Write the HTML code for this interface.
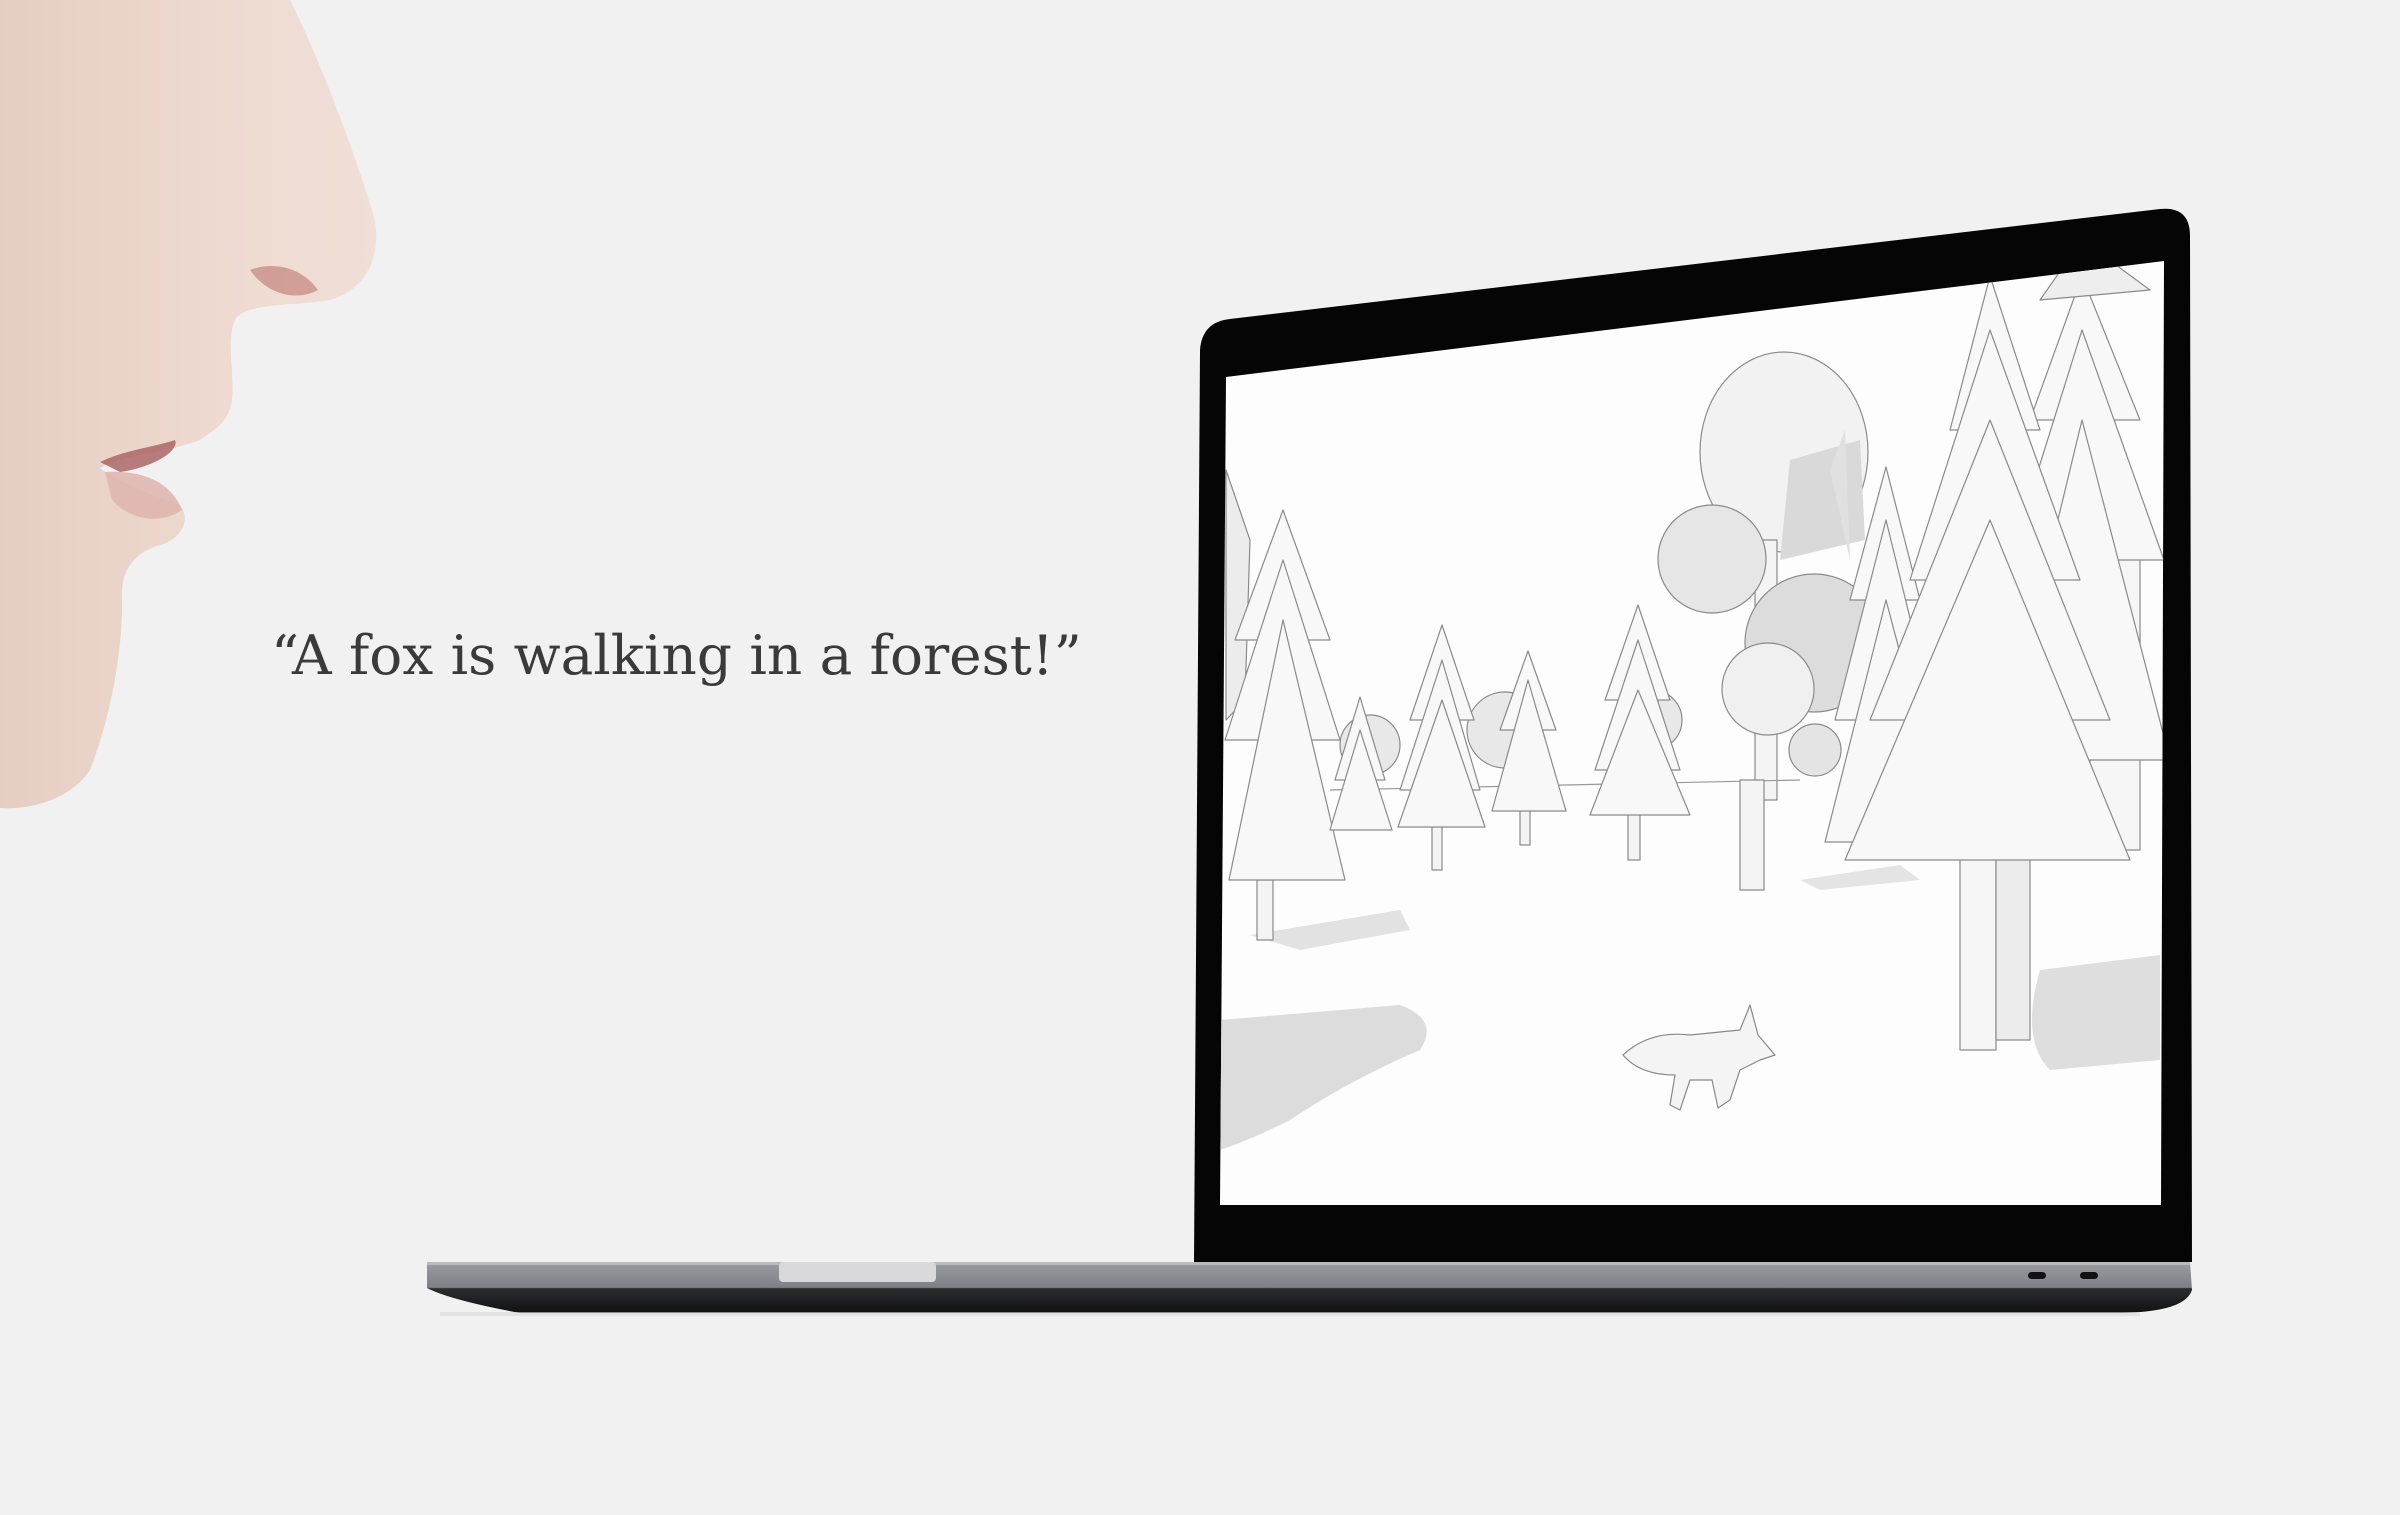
<!DOCTYPE html>
<html><head><meta charset="utf-8">
<style>
html,body{margin:0;padding:0;}
body{width:2400px;height:1515px;background:#f1f1f2;position:relative;overflow:hidden;}
.q{position:absolute;left:271px;top:624px;font-family:"DejaVu Serif","Liberation Serif",serif;font-size:54px;color:#3a3a3a;white-space:nowrap;transform-origin:0 0;transform:scaleX(1.015);}
</style></head><body>
<svg width="2400" height="1515" viewBox="0 0 2400 1515" style="position:absolute;left:0;top:0">
<defs>
<linearGradient id="skin" x1="0" y1="0" x2="1" y2="0">
<stop offset="0" stop-color="#e6cdc2"/><stop offset="0.6" stop-color="#eedad1"/><stop offset="1" stop-color="#f0dfd7"/>
</linearGradient>
<linearGradient id="base" x1="0" y1="0" x2="0" y2="1">
<stop offset="0" stop-color="#9a9ca1"/><stop offset="0.5" stop-color="#7e8086"/><stop offset="0.52" stop-color="#2c2d30"/><stop offset="1" stop-color="#111"/>
</linearGradient>
<clipPath id="scr"><polygon points="1226,377 2164,261 2161,1205 1220,1205"/></clipPath>
</defs>
<path d="M0,0 L290,0 C320,60 350,140 372,210 C385,250 368,290 330,300 C300,306 250,302 236,318 C225,340 235,370 232,400 C230,420 215,430 200,440 C170,452 120,455 100,468 C115,480 150,495 180,505 C192,520 180,540 160,545 C135,552 120,570 122,600 C123,650 110,720 90,770 C70,800 30,810 0,808 Z" fill="url(#skin)"/>
<path d="M250,270 C270,262 300,265 318,290 C300,300 270,298 250,270 Z" fill="#c98f88" opacity="0.8"/>
<path d="M100,462 C125,450 150,448 175,440 C180,452 150,468 120,472 Z" fill="#a85e5e" opacity="0.8"/>
<path d="M105,472 C140,470 170,480 182,510 C160,525 130,520 112,500 Z" fill="#e0b6b0" opacity="0.9"/>
<path d="M427,1262 L2190,1262 L2192,1290 Q2185,1312 2120,1313 L520,1313 Q450,1300 427,1288 Z" fill="url(#base)"/>
<rect x="427" y="1262" width="1763" height="3" fill="#b8babd"/>
<rect x="779" y="1262" width="157" height="20" rx="4" fill="#d9d9db"/>
<rect x="2028" y="1272" width="18" height="7" rx="3.5" fill="#111"/>
<rect x="2080" y="1272" width="18" height="7" rx="3.5" fill="#111"/>
<rect x="440" y="1312" width="1700" height="4" fill="#d8d8d8" opacity="0.6"/>
<path d="M1230,319 L2160,209 Q2190,206 2190,236 L2192,1262 L1194,1262 L1200,350 Q1202,322 1230,319 Z" fill="#050505"/>
<polygon points="1226,377 2164,261 2161,1205 1220,1205" fill="#fdfdfd"/>
<g clip-path="url(#scr)" stroke="#8a8a8a" stroke-width="1.2" stroke-linejoin="round">
<path d="M1220,1020 L1400,1005 Q1440,1020 1420,1050 Q1350,1080 1290,1120 Q1250,1140 1220,1150 Z" fill="#dcdcdc" stroke="none"/>
<path d="M1250,935 L1400,910 L1410,930 L1300,950 Z" fill="#e2e2e2" stroke="none"/>
<path d="M2040,970 L2160,955 L2160,1060 L2050,1070 Q2020,1040 2040,970 Z" fill="#dedede" stroke="none"/>
<path d="M1800,880 L1900,865 L1920,880 L1820,890Z" fill="#e4e4e4" stroke="none"/>
<path d="M1226,470 L1250,540 L1245,700 L1226,720Z" fill="#ececec"/>
<ellipse cx="1784" cy="452" rx="84" ry="100" fill="#f2f2f2"/>
<path d="M1790,460 L1860,440 L1865,540 L1780,560Z" fill="#d9d9d9" stroke="none"/>
<rect x="1755" y="540" width="22" height="260" fill="#f4f4f4"/>
<circle cx="1712" cy="559" r="54" fill="#e6e6e6"/>
<circle cx="1814" cy="643" r="69" fill="#dcdcdc"/>
<circle cx="1768" cy="689" r="46" fill="#f0f0f0"/>
<circle cx="1505" cy="730" r="38" fill="#e8e8e8"/>
<circle cx="1370" cy="745" r="30" fill="#e8e8e8"/>
<circle cx="1652" cy="720" r="30" fill="#e8e8e8"/>
<circle cx="1815" cy="750" r="26" fill="#e4e4e4"/>
<line x1="1330" y1="790" x2="1800" y2="780" stroke="#999"/>
<rect x="1257" y="880" width="16" height="60" fill="#f4f4f4"/>
<rect x="1432" y="820" width="10" height="50" fill="#f4f4f4"/>
<rect x="1520" y="800" width="10" height="45" fill="#f4f4f4"/>
<rect x="1628" y="800" width="12" height="60" fill="#f4f4f4"/>
<rect x="1740" y="780" width="24" height="110" fill="#f4f4f4"/>
<g fill="#f8f8f8">
<path d="M1283,510 L1235,640 L1330,640Z"/><path d="M1283,560 L1225,740 L1340,740Z"/><path d="M1283,620 L1229,880 L1345,880Z"/>
<path d="M1360,697 L1335,780 L1385,780Z"/><path d="M1360,730 L1330,830 L1392,830Z"/>
<path d="M1442,625 L1410,720 L1474,720Z"/><path d="M1442,660 L1400,790 L1480,790Z"/><path d="M1442,700 L1398,827 L1485,827Z"/>
<path d="M1528,651 L1500,730 L1556,730Z"/><path d="M1528,680 L1492,811 L1566,811Z"/>
<path d="M1638,605 L1605,700 L1670,700Z"/><path d="M1638,640 L1595,770 L1680,770Z"/><path d="M1638,690 L1590,815 L1690,815Z"/>
<path d="M1886,467 L1850,600 L1920,600Z"/><path d="M1886,520 L1835,720 L1935,720Z"/><path d="M1886,600 L1825,842 L1950,842Z"/>
<rect x="2090" y="500" width="50" height="350" fill="#f6f6f6"/>
<path d="M2082,276 L2030,420 L2140,420Z"/><path d="M2082,330 L2010,560 L2164,560Z"/><path d="M2082,420 L2000,760 L2170,760Z"/>
<path d="M2082,240 L2040,300 L2150,290Z" fill="#eee"/>
<rect x="1960" y="830" width="36" height="220" fill="#f6f6f6"/><rect x="1996" y="830" width="34" height="210" fill="#ececec"/>
<path d="M1990,276 L1950,430 L2040,430Z"/><path d="M1990,330 L1910,580 L2080,580Z"/><path d="M1990,420 L1870,720 L2110,720Z"/><path d="M1990,520 L1845,860 L2130,860Z"/>
</g>
<path d="M1830,470 L1845,430 L1850,560Z" fill="#e0e0e0" stroke="none"/>
<g fill="#f4f4f4" stroke="#888">
<path d="M1623,1055 Q1650,1030 1690,1035 L1740,1030 L1750,1005 L1758,1035 L1775,1055 L1760,1060 L1740,1070 L1730,1100 L1718,1108 L1712,1080 L1690,1080 L1680,1110 L1670,1105 L1675,1075 Q1640,1075 1623,1055Z"/>
</g>
</g>
</svg>
<div class="q">“A fox is walking in a forest!”</div>
</body></html>
